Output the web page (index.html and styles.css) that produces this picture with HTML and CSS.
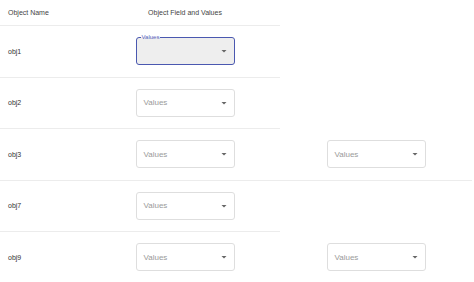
FILE: index.html
```html
<!DOCTYPE html>
<html>
<head>
  <meta charset="UTF-8">
  <title>Object Fields</title>
  <link rel="stylesheet" href="styles.css">
</head>
<body>
  <div class="table">
    <div class="row head">
      <div class="cell name">Object Name</div>
      <div class="cell field">Object Field and Values</div>
    </div>

    <div class="row">
      <div class="cell name">obj1</div>
      <div class="cell field">
        <div class="select focused">
          <span class="floating">Values</span>
          <span class="value"></span>
          <svg class="arrow" viewBox="0 0 24 24"><path d="M7 10l5 5 5-5z"/></svg>
        </div>
      </div>
    </div>

    <div class="row">
      <div class="cell name">obj2</div>
      <div class="cell field">
        <div class="select">
          <span class="value">Values</span>
          <svg class="arrow" viewBox="0 0 24 24"><path d="M7 10l5 5 5-5z"/></svg>
        </div>
      </div>
    </div>

    <div class="row">
      <div class="cell name">obj3</div>
      <div class="cell field">
        <div class="select">
          <span class="value">Values</span>
          <svg class="arrow" viewBox="0 0 24 24"><path d="M7 10l5 5 5-5z"/></svg>
        </div>
      </div>
      <div class="cell extra">
        <div class="select">
          <span class="value">Values</span>
          <svg class="arrow" viewBox="0 0 24 24"><path d="M7 10l5 5 5-5z"/></svg>
        </div>
      </div>
    </div>

    <div class="row">
      <div class="cell name">obj7</div>
      <div class="cell field">
        <div class="select">
          <span class="value">Values</span>
          <svg class="arrow" viewBox="0 0 24 24"><path d="M7 10l5 5 5-5z"/></svg>
        </div>
      </div>
    </div>

    <div class="row">
      <div class="cell name">obj9</div>
      <div class="cell field">
        <div class="select">
          <span class="value">Values</span>
          <svg class="arrow" viewBox="0 0 24 24"><path d="M7 10l5 5 5-5z"/></svg>
        </div>
      </div>
      <div class="cell extra">
        <div class="select">
          <span class="value">Values</span>
          <svg class="arrow" viewBox="0 0 24 24"><path d="M7 10l5 5 5-5z"/></svg>
        </div>
      </div>
    </div>
  </div>
</body>
</html>
```

FILE: styles.css
```css
body {
  margin: 0;
  font-family: 'Liberation Sans', Arial, sans-serif;
  background: #fff;
  color: #333;
  overflow: hidden;
}

.row {
  display: flex;
  height: 51.5px;
}

.row.head {
  height: 26px;
}

.cell {
  display: flex;
  align-items: center;
  box-sizing: border-box;
  border-bottom: 1px solid #ececec;
  font-size: 7px;
}

.head .cell {
  color: #444;
}

.cell.name {
  width: 90px;
  padding-left: 8px;
}

.cell.field {
  width: 190px;
  justify-content: center;
}

.cell.extra {
  width: 192px;
  justify-content: center;
}

.select {
  position: relative;
  display: flex;
  align-items: center;
  box-sizing: border-box;
  width: 99px;
  height: 28px;
  padding: 0 4px 0 7px;
  border: 1px solid #dedede;
  border-radius: 3px;
  background: #fff;
}

.select .value {
  flex: 1;
  font-size: 8px;
  color: #9a9a9a;
}

.select .arrow {
  width: 12px;
  height: 12px;
  fill: #666;
}

.select.focused {
  border: 1.5px solid #4a58b0;
  background: #eeeeee;
}

.floating {
  position: absolute;
  top: -4px;
  left: 4px;
  padding: 0 1px;
  font-size: 6px;
  line-height: 6px;
  color: #5a67c2;
  background: linear-gradient(#fff 50%, #eee 50%);
}
```
